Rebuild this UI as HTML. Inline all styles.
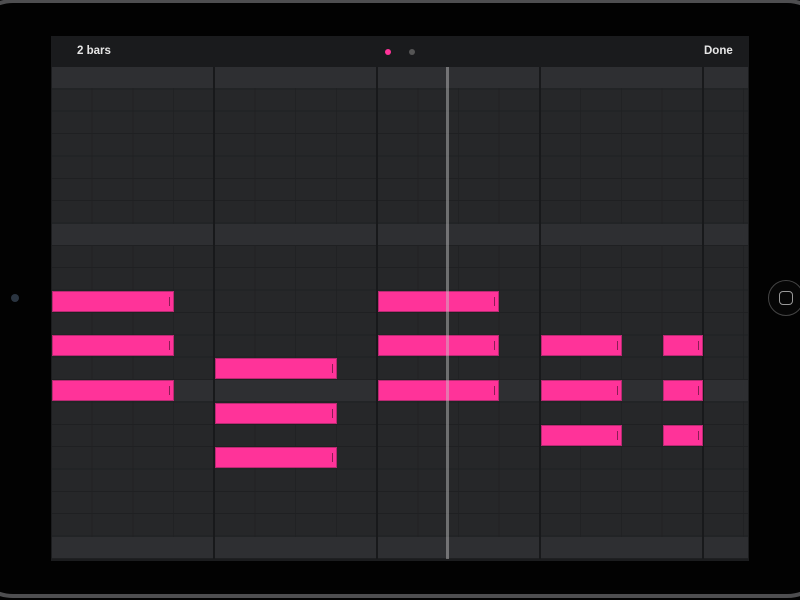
<!DOCTYPE html>
<html><head><style>
html,body{margin:0;padding:0;width:800px;height:600px;overflow:hidden;background:#020202;font-family:"Liberation Sans",sans-serif}
.frame{position:absolute;left:-32px;top:-1px;width:864px;height:599px;border-radius:45px;border:4px solid #4e4e50;box-sizing:border-box}
.screen{position:absolute;left:51px;top:36px;width:698px;height:525px;background:#1b1c1e}
.hdr{position:absolute;left:0;top:0;width:698px;height:31px;background:#1a1b1d}
.t{position:absolute;color:#e6e6e6;font-weight:bold;font-size:11.5px;top:9px}
.grid{position:absolute;left:1px;top:31px;width:696px;height:492px;background-color:#262729;
background-image:repeating-linear-gradient(to bottom,transparent 0,transparent 21.36px,#1f2022 21.36px,#1f2022 22.36px),
repeating-linear-gradient(to right,transparent 0,transparent 39.7px,#212224 39.7px,#212224 40.7px)}
.lr{position:absolute;left:0;width:696px;height:21.4px;background:#2e2f32}
.bl{position:absolute;top:0;width:2px;height:492px;background:#18191b}
.n{position:absolute;height:21px;background:#ff3399;box-sizing:border-box;border:1px solid #b82a72}
.n::after{content:"";position:absolute;right:3px;top:5px;width:1px;height:9px;background:#8a1d55}
.ph{position:absolute;left:394px;top:0;width:3px;height:492px;background:rgba(200,200,200,0.45)}
</style></head><body>
<div class="frame"></div>
<div style="position:absolute;left:11px;top:294px;width:8px;height:8px;border-radius:50%;background:#2a3440"></div>
<div style="position:absolute;left:768px;top:280px;width:36px;height:36px;border-radius:50%;border:1px solid #444;box-sizing:border-box;background:#060606"></div>
<div style="position:absolute;left:779px;top:291px;width:14px;height:14px;border-radius:4px;border:1.5px solid #999;box-sizing:border-box"></div>
<div class="screen">
<div class="hdr">
<div class="t" style="left:26px">2 bars</div>
<div style="position:absolute;left:334px;top:13px;width:6px;height:6px;border-radius:50%;background:#ff3399"></div>
<div style="position:absolute;left:358px;top:13px;width:6px;height:6px;border-radius:50%;background:#555"></div>
<div class="t" style="left:653px">Done</div>
</div>
<div class="grid">
<div class="lr" style="top:0"></div>
<div class="lr" style="top:156.5px"></div>
<div class="lr" style="top:313px"></div>
<div class="lr" style="top:469.6px"></div>
<div class="bl" style="left:161px"></div>
<div class="bl" style="left:324px"></div>
<div class="bl" style="left:487px"></div>
<div class="bl" style="left:650px"></div>

<div class="n" style="left:0;top:224px;width:122px"></div>
<div class="n" style="left:326px;top:224px;width:121px"></div>

<div class="n" style="left:0;top:268px;width:122px"></div>
<div class="n" style="left:326px;top:268px;width:121px"></div>
<div class="n" style="left:489px;top:268px;width:81px"></div>
<div class="n" style="left:611px;top:268px;width:40px"></div>

<div class="n" style="left:163px;top:291px;width:122px"></div>

<div class="n" style="left:0;top:313px;width:122px"></div>
<div class="n" style="left:326px;top:313px;width:121px"></div>
<div class="n" style="left:489px;top:313px;width:81px"></div>
<div class="n" style="left:611px;top:313px;width:40px"></div>

<div class="n" style="left:163px;top:336px;width:122px"></div>

<div class="n" style="left:489px;top:358px;width:81px"></div>
<div class="n" style="left:611px;top:358px;width:40px"></div>

<div class="n" style="left:163px;top:380px;width:122px"></div>
<div class="ph"></div>
</div>
</div>
</body></html>
